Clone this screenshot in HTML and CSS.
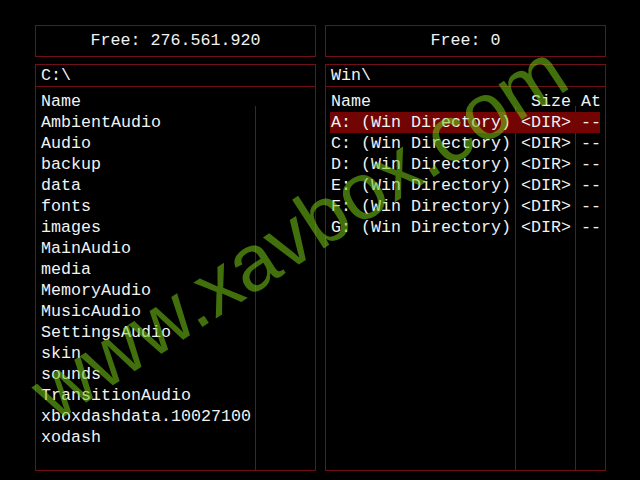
FILE: index.html
```html
<!DOCTYPE html>
<html>
<head>
<meta charset="utf-8">
<link rel="stylesheet" href="styles.css">
</head>
<body>
<div class="screen">
  <div class="free">Free: 276.561.920</div>
  <div class="free">Free: 0</div>

  <div class="panel">
    <div class="path">C:\</div>
    <div class="list list-left">
      <div class="row row-left head"><span>Name</span><span></span></div>
      <div class="row row-left"><span>AmbientAudio</span><span></span></div>
      <div class="row row-left"><span>Audio</span><span></span></div>
      <div class="row row-left"><span>backup</span><span></span></div>
      <div class="row row-left"><span>data</span><span></span></div>
      <div class="row row-left"><span>fonts</span><span></span></div>
      <div class="row row-left"><span>images</span><span></span></div>
      <div class="row row-left"><span>MainAudio</span><span></span></div>
      <div class="row row-left"><span>media</span><span></span></div>
      <div class="row row-left"><span>MemoryAudio</span><span></span></div>
      <div class="row row-left"><span>MusicAudio</span><span></span></div>
      <div class="row row-left"><span>SettingsAudio</span><span></span></div>
      <div class="row row-left"><span>skin</span><span></span></div>
      <div class="row row-left"><span>sounds</span><span></span></div>
      <div class="row row-left"><span>TransitionAudio</span><span></span></div>
      <div class="row row-left"><span>xboxdashdata.10027100</span><span></span></div>
      <div class="row row-left"><span>xodash</span><span></span></div>
    </div>
  </div>

  <div class="panel">
    <div class="path">Win\</div>
    <div class="list list-right">
      <div class="row row-right head"><span>Name</span><span class="size">Size</span><span class="attr">At</span></div>
      <div class="row row-right selected"><span>A: (Win Directory)</span><span class="size">&lt;DIR&gt;</span><span class="attr">--</span></div>
      <div class="row row-right"><span>C: (Win Directory)</span><span class="size">&lt;DIR&gt;</span><span class="attr">--</span></div>
      <div class="row row-right"><span>D: (Win Directory)</span><span class="size">&lt;DIR&gt;</span><span class="attr">--</span></div>
      <div class="row row-right"><span>E: (Win Directory)</span><span class="size">&lt;DIR&gt;</span><span class="attr">--</span></div>
      <div class="row row-right"><span>F: (Win Directory)</span><span class="size">&lt;DIR&gt;</span><span class="attr">--</span></div>
      <div class="row row-right"><span>G: (Win Directory)</span><span class="size">&lt;DIR&gt;</span><span class="attr">--</span></div>
    </div>
  </div>
</div>
<div class="watermark">www.xavbox.com</div>
</body>
</html>
```

FILE: styles.css
```css
:root {
  --line: #6e1016;
  --text: #f2f2f2;
}

html, body {
  margin: 0;
  padding: 0;
}

body {
  width: 640px;
  height: 480px;
  background: #000;
  overflow: hidden;
  position: relative;
  color: var(--text);
  font-family: "Liberation Mono", "DejaVu Sans Mono", monospace;
  font-size: 16.6667px;
}

.screen {
  display: grid;
  grid-template-columns: 281px 281px;
  grid-template-rows: 32px 407px;
  column-gap: 9px;
  row-gap: 7px;
  padding: 25px 0 0 35px;
}

.free {
  border: 1px solid var(--line);
  text-align: center;
  line-height: 30px;
  white-space: pre;
}

.panel {
  border: 1px solid var(--line);
  display: flex;
  flex-direction: column;
  min-height: 0;
}

.path {
  height: 21px;
  line-height: 21px;
  padding-left: 5px;
  border-bottom: 1px solid var(--line);
  white-space: pre;
}

.list {
  flex: 1;
  padding: 4px 5px 0 4px;
  background-repeat: no-repeat;
}

.list-left {
  background-image: linear-gradient(var(--line), var(--line));
  background-position: 219px 19px;
  background-size: 1px calc(100% - 19px);
}

.list-right {
  background-image:
    linear-gradient(var(--line), var(--line)),
    linear-gradient(var(--line), var(--line));
  background-position: 189px 19px, 249px 19px;
  background-size: 1px calc(100% - 19px), 1px calc(100% - 19px);
}

.row {
  display: grid;
  height: 21px;
  line-height: 21px;
  padding-left: 1px;
  white-space: pre;
}

.row-left {
  grid-template-columns: 1fr 60px;
}

.row-right {
  grid-template-columns: 190px 50px 1fr;
}

.size {
  text-align: right;
}

.attr {
  padding-left: 10px;
  overflow: visible;
}

.selected {
  background: #720404;
}

.watermark {
  position: absolute;
  left: 55px;
  top: 356px;
  font-family: "Liberation Sans", Arial, sans-serif;
  font-size: 80px;
  line-height: 80px;
  white-space: nowrap;
  color: #76c816;
  opacity: 0.56;
  transform-origin: 0 67.7px;
  transform: rotate(-33deg);
  pointer-events: none;
}
```
